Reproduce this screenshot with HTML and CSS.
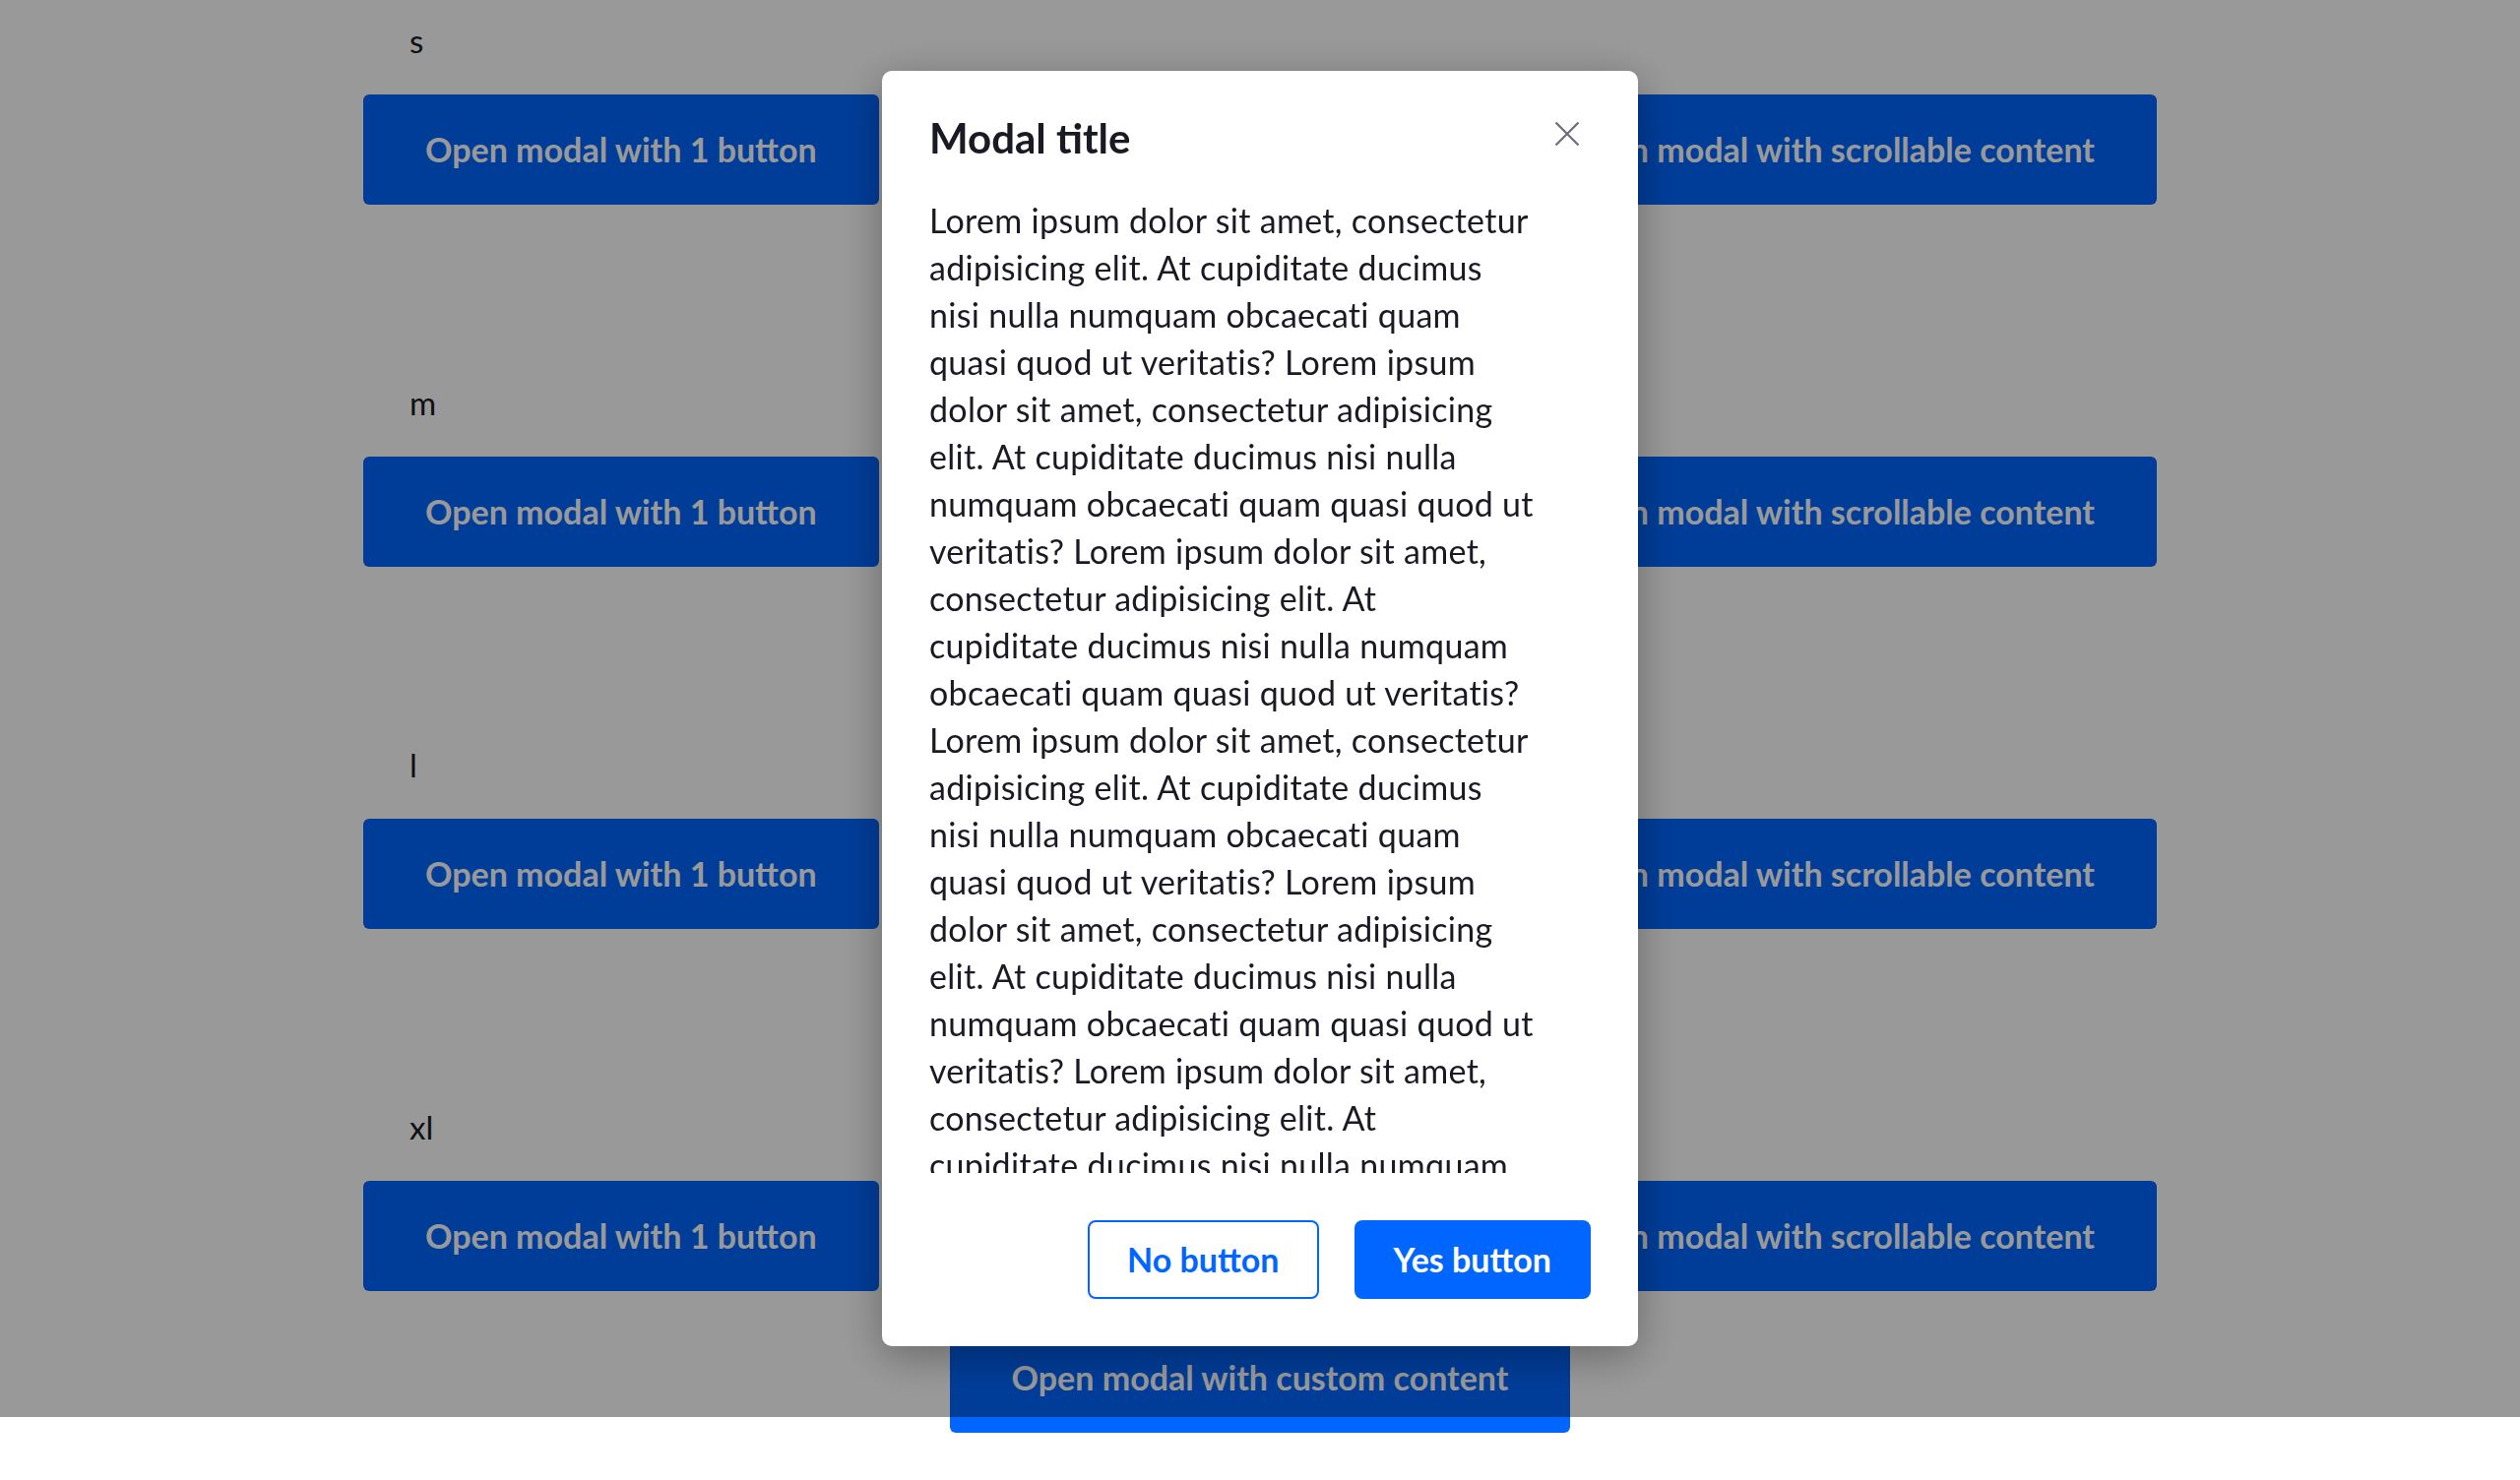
FILE: index.html
```html
<!DOCTYPE html>
<html lang="en">
<head>
<meta charset="utf-8">
<title>Modal sizes</title>
<link rel="stylesheet" href="styles.css">
</head>
<body>
<main class="page">
  <section class="size-group">
    <div class="size-label">s</div>
    <div class="btn-row">
      <button class="btn btn-primary">Open modal with 1 button</button>
      <button class="btn btn-primary">Open modal with 2 buttons</button>
      <button class="btn btn-primary">Open modal with scrollable content</button>
    </div>
  </section>
  <section class="size-group">
    <div class="size-label">m</div>
    <div class="btn-row">
      <button class="btn btn-primary">Open modal with 1 button</button>
      <button class="btn btn-primary">Open modal with 2 buttons</button>
      <button class="btn btn-primary">Open modal with scrollable content</button>
    </div>
  </section>
  <section class="size-group">
    <div class="size-label">l</div>
    <div class="btn-row">
      <button class="btn btn-primary">Open modal with 1 button</button>
      <button class="btn btn-primary">Open modal with 2 buttons</button>
      <button class="btn btn-primary">Open modal with scrollable content</button>
    </div>
  </section>
  <section class="size-group last">
    <div class="size-label">xl</div>
    <div class="btn-row">
      <button class="btn btn-primary">Open modal with 1 button</button>
      <button class="btn btn-primary">Open modal with 2 buttons</button>
      <button class="btn btn-primary">Open modal with scrollable content</button>
    </div>
  </section>
  <div class="custom-row">
    <button class="btn btn-primary">Open modal with custom content</button>
  </div>
</main>

<div class="backdrop">
  <div class="modal" role="dialog" aria-labelledby="modal-title">
    <header class="modal-header">
      <h2 class="modal-title" id="modal-title">Modal title</h2>
      <button class="modal-close" aria-label="Close">
        <svg width="26" height="26" viewBox="0 0 26 26" aria-hidden="true">
          <path d="M1.5 1.5 L24.5 24.5 M24.5 1.5 L1.5 24.5" stroke="#6b6b7c" stroke-width="2.2" fill="none"/>
        </svg>
      </button>
    </header>
    <div class="modal-body">
      <p>Lorem ipsum dolor sit amet, consectetur<br>
adipisicing elit. At cupiditate ducimus<br>
nisi nulla numquam obcaecati quam<br>
quasi quod ut veritatis? Lorem ipsum<br>
dolor sit amet, consectetur adipisicing<br>
elit. At cupiditate ducimus nisi nulla<br>
numquam obcaecati quam quasi quod ut<br>
veritatis? Lorem ipsum dolor sit amet,<br>
consectetur adipisicing elit. At<br>
cupiditate ducimus nisi nulla numquam<br>
obcaecati quam quasi quod ut veritatis?<br>
Lorem ipsum dolor sit amet, consectetur<br>
adipisicing elit. At cupiditate ducimus<br>
nisi nulla numquam obcaecati quam<br>
quasi quod ut veritatis? Lorem ipsum<br>
dolor sit amet, consectetur adipisicing<br>
elit. At cupiditate ducimus nisi nulla<br>
numquam obcaecati quam quasi quod ut<br>
veritatis? Lorem ipsum dolor sit amet,<br>
consectetur adipisicing elit. At<br>
cupiditate ducimus nisi nulla numquam<br>
obcaecati quam quasi quod ut veritatis?<br>
Lorem ipsum dolor sit amet, consectetur<br>
adipisicing elit. At cupiditate ducimus<br>
nisi nulla numquam obcaecati quam<br>
quasi quod ut veritatis?</p>
    </div>
    <footer class="modal-footer">
      <button class="btn btn-secondary">No button</button>
      <button class="btn btn-confirm">Yes button</button>
    </footer>
  </div>
</div>
</body>
</html>
```

FILE: styles.css
```css
* { box-sizing: border-box; }

html, body {
  margin: 0;
  padding: 0;
  background: #ffffff;
  font-family: Lato, "Open Sans", "Noto Sans", sans-serif;
  color: #1a1a24;
}

body { min-height: 1504px; }

.page {
  width: 1822px;
  margin: 0 auto;
  padding-top: 17px;
}

.size-group { margin-bottom: 177px; }
.size-group.last { margin-bottom: 32px; }

.size-label {
  font-size: 33px;
  line-height: 48px;
  padding-left: 47px;
  margin-bottom: 31px;
}

.btn-row {
  display: flex;
  justify-content: space-between;
}

.btn {
  font-family: inherit;
  font-weight: 700;
  font-size: 34px;
  line-height: 44px;
  border: 2px solid transparent;
  border-radius: 6px;
  cursor: pointer;
}

.btn-primary {
  background: #0066ff;
  color: #ffffff;
  height: 112px;
  padding: 0 61px;
  border-radius: 6px;
}

.custom-row {
  display: flex;
  justify-content: center;
}

.backdrop {
  position: fixed;
  top: 0;
  left: 0;
  right: 0;
  height: 1440px;
  background: rgba(0, 0, 0, 0.4);
  display: flex;
  align-items: center;
  justify-content: center;
}

.modal {
  width: 768px;
  height: 1296px;
  background: #ffffff;
  border-radius: 10px;
  box-shadow: 0 10px 44px rgba(0, 0, 0, 0.32);
  padding: 48px;
  display: flex;
  flex-direction: column;
}

.modal-header {
  display: flex;
  align-items: center;
  justify-content: space-between;
  height: 40px;
}

.modal-title {
  margin: 0;
  font-size: 42px;
  line-height: 40px;
  font-weight: 700;
  color: #1a1a24;
}

.modal-close {
  width: 48px;
  height: 48px;
  margin-top: -8px;
  padding: 0;
  border: 0;
  background: transparent;
  display: flex;
  align-items: center;
  justify-content: center;
}

.modal-body {
  flex: 1;
  margin-top: 40px;
  overflow: hidden;
  font-size: 34px;
  letter-spacing: 0.3px;
  line-height: 48px;
  color: #1a1a24;
}

.modal-body p {
  margin: 0;
  white-space: nowrap;
}

.modal-footer {
  margin-top: 48px;
  display: flex;
  justify-content: flex-end;
  gap: 36px;
}

.modal-footer .btn {
  height: 80px;
  padding: 0 38px;
  border-radius: 8px;
}

.btn-secondary {
  background: #ffffff;
  border-color: #0066ff;
  color: #0066ff;
}

.btn-confirm {
  background: #0066ff;
  border-color: #0066ff;
  color: #ffffff;
}
```
